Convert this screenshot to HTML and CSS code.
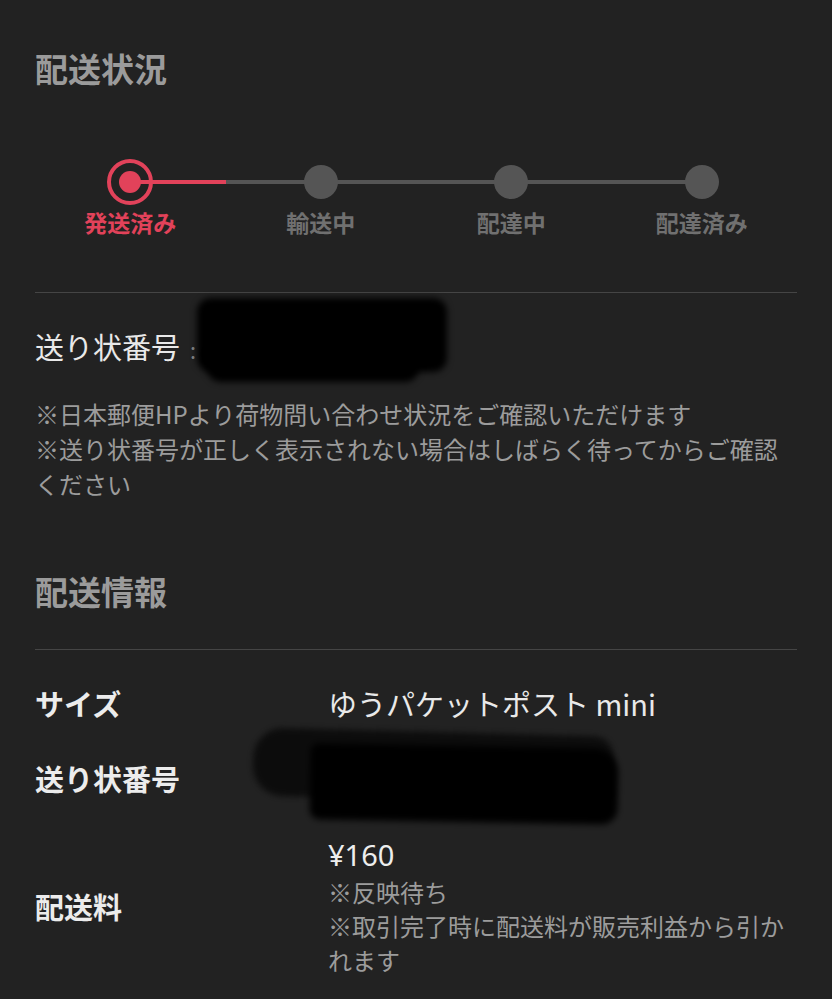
FILE: index.html
```html
<!DOCTYPE html>
<html lang="ja">
<head>
<meta charset="utf-8">
<title>配送状況</title>
<link rel="stylesheet" href="styles.css">
</head>
<body>
<main class="page">
  <section class="status">
    <h2 class="heading">配送状況</h2>
    <div class="steps">
      <div class="track"><div class="track-done"></div></div>
      <div class="step current">
        <div class="dot-area"><span class="ring"><span class="core"></span></span></div>
        <div class="step-label">発送済み</div>
      </div>
      <div class="step">
        <div class="dot-area"><span class="dot"></span></div>
        <div class="step-label">輸送中</div>
      </div>
      <div class="step">
        <div class="dot-area"><span class="dot"></span></div>
        <div class="step-label">配達中</div>
      </div>
      <div class="step">
        <div class="dot-area"><span class="dot"></span></div>
        <div class="step-label">配達済み</div>
      </div>
    </div>
  </section>

  <hr class="divider">

  <section class="tracking">
    <div class="tracking-line">
      <span class="tracking-label">送り状番号</span><span class="colon">:</span>
      <span class="redact redact-a"></span>
      <span class="redact redact-a2"></span>
    </div>
    <p class="notes">※日本郵便HPより荷物問い合わせ状況をご確認いただけます<br>※送り状番号が正しく表示されない場合はしばらく待ってからご確認ください</p>
  </section>

  <section class="info">
    <h2 class="heading heading-info">配送情報</h2>
    <hr class="divider">
    <div class="rows">
      <div class="row">
        <div class="row-label">サイズ</div>
        <div class="row-value">ゆうパケットポスト mini</div>
      </div>
      <div class="row">
        <div class="row-label">送り状番号</div>
        <div class="row-value redact-host">
          <span class="redact redact-b1"></span>
          <span class="redact redact-b2"></span>
        </div>
      </div>
      <div class="row row-fee">
        <div class="row-label">配送料</div>
        <div class="row-value">
          <div class="price">¥160</div>
          <div class="fee-notes">※反映待ち<br>※取引完了時に配送料が販売利益から引かれます</div>
        </div>
      </div>
    </div>
  </section>
</main>
</body>
</html>
```

FILE: styles.css
```css
html, body {
  margin: 0;
  padding: 0;
  background: #222222;
}
body {
  font-family: "Noto Sans CJK JP", "Noto Sans", sans-serif;
  color: #e9e9e9;
}
.page {
  padding: 48px 35px 0 35px;
  width: 762px;
}
.heading {
  margin: 0;
  font-size: 33px;
  line-height: 40px;
  font-weight: 700;
  color: #9b9b9b;
  letter-spacing: 0;
}
.steps {
  position: relative;
  display: grid;
  grid-template-columns: repeat(4, 1fr);
  margin-top: 71px;
}
.track {
  position: absolute;
  top: 21px;
  left: 12.5%;
  right: 12.5%;
  height: 4px;
  background: #555555;
}
.track-done {
  width: 16.75%;
  height: 100%;
  background: #e2425a;
}
.step {
  display: flex;
  flex-direction: column;
  align-items: center;
  position: relative;
}
.dot-area {
  height: 46px;
  display: flex;
  align-items: center;
  justify-content: center;
}
.dot {
  width: 34px;
  height: 34px;
  border-radius: 50%;
  background: #555555;
}
.ring {
  width: 38px;
  height: 38px;
  border: 4px solid #e2425a;
  border-radius: 50%;
  display: flex;
  align-items: center;
  justify-content: center;
}
.core {
  width: 22px;
  height: 22px;
  border-radius: 50%;
  background: #e2425a;
}
.step-label {
  margin-top: 2px;
  font-size: 23px;
  line-height: 30px;
  font-weight: 700;
  color: #707070;
}
.step.current .step-label {
  color: #e2425a;
}
.divider {
  margin: 0;
  border: 0;
  height: 1px;
  background: #454545;
}
.status + .divider {
  margin-top: 55px;
}
.tracking {
  padding-top: 33px;
}
.tracking-line {
  position: relative;
  font-size: 29px;
  line-height: 40px;
  color: #e9e9e9;
}
.colon {
  color: #8a8a8a;
  font-size: 22px;
  margin-left: 10px;
}
.redact {
  position: absolute;
  background: #000;
  filter: blur(3px);
  border-radius: 14px;
}
.redact-a {
  left: 162px;
  top: -28px;
  width: 250px;
  height: 74px;
}
.redact-a2 {
  left: 172px;
  top: 20px;
  width: 212px;
  height: 36px;
}
.notes {
  margin: 27px 0 0 0;
  font-size: 24px;
  line-height: 35px;
  color: #9c9c9c;
}
.heading-info {
  margin-top: 70px;
}
.info .divider {
  margin-top: 38px;
}
.rows {
  display: flex;
  flex-direction: column;
  gap: 35px;
  padding-top: 33px;
}
.row {
  display: grid;
  grid-template-columns: 293px 1fr;
  align-items: center;
}
.row-fee {
  margin-top: 2px;
}
.row-label {
  font-size: 29px;
  line-height: 40px;
  font-weight: 700;
  color: #ececec;
}
.row-value {
  font-size: 29px;
  line-height: 40px;
  color: #e9e9e9;
}
.redact-host {
  position: relative;
  height: 40px;
}
.redact-b1 {
  left: -75px;
  top: -26px;
  width: 360px;
  height: 68px;
  background: #0c0c0c;
  border-radius: 30px 20px 10px 30px;
  transform: rotate(1.5deg);
}
.redact-b2 {
  left: -18px;
  top: -12px;
  width: 308px;
  height: 76px;
  border-radius: 8px 24px 16px 10px;
  transform: rotate(1deg);
}
.price {
  font-size: 29px;
  line-height: 40px;
  color: #ededed;
  font-family: "Noto Sans", "Noto Sans CJK JP", sans-serif;
}
.fee-notes {
  font-size: 24px;
  line-height: 34px;
  color: #9c9c9c;
}
```
